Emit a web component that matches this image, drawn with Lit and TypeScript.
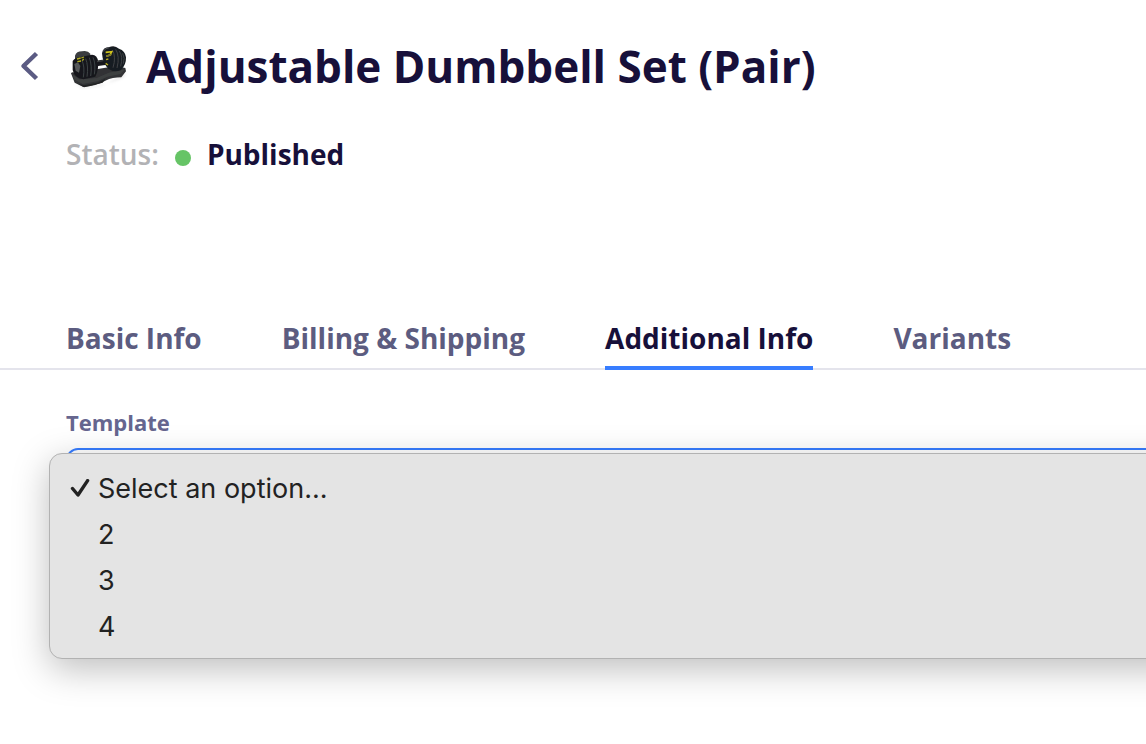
import { LitElement, html, css, svg } from "lit";
import { customElement, state } from "lit/decorators.js";
import { classMap } from "lit/directives/class-map.js";

const TABS = ["Basic Info", "Billing & Shipping", "Additional Info", "Variants"];
const OPTIONS = ["Select an option...", "2", "3", "4"];

const chevron = svg`<path d="M36.5 23.5 L23.5 36 L36.5 48.5" fill="none" stroke="#5b5b83" stroke-width="4.5" stroke-linejoin="round" />`;

@customElement("product-thumb")
export class ProductThumb extends LitElement {
  static styles = css`
    :host {
      display: block;
      flex: none;
      width: 64px;
      height: 50px;
    }
    .art {
      display: block;
      width: 100%;
      height: 100%;
    }
  `;

  render() {
    return html`
      <svg class="art" viewBox="0 -3 192 150" role="img" aria-label="Dumbbell set">
        <defs>
          <filter id="soft"><feGaussianBlur stdDeviation="1.5" /></filter>
          <filter id="shade"><feGaussianBlur stdDeviation="4" /></filter>
        </defs>
        <path d="M22 118 L52 136 L120 126 L180 94 L170 106 L110 130 L50 139 Z" fill="#999" opacity=".4" filter="url(#shade)" />
        <g filter="url(#soft)">
          <path d="M15 94 Q18 88 28 92 L150 72 L178 78 L180 88 L166 106 Q140 106 118 116 Q90 132 52 135 L26 122 Z" fill="#303234" />
          <path d="M17 95 L40 112 L92 108 L128 92 L176 82 L164 96 L124 104 L94 118 L50 126 L26 113 Z" fill="#3e3f41" />
          <path d="M36 125 L54 130 L96 122 L118 110 L110 122 L54 136 Z" fill="#202224" />
          <path d="M27 41 Q31 28 48 28 Q65 24 73 35 L73 52 L27 56 Z" fill="#3a3d3f" />
          <path d="M20 57 Q28 45 48 44 L78 38 Q94 38 96 58 Q99 82 88 104 L52 112 Q25 108 20 84 Z" fill="#16191c" />
          <path d="M87 57 L122 51 L123 68 L91 73 Z" fill="#17191b" />
          <path d="M93 59 L118 55" stroke="#414446" stroke-width="3" />
          <path d="M108 34 Q111 15 130 15 Q146 8 159 20 Q178 26 180 46 Q181 69 164 85 Q145 93 127 80 Q110 64 108 34 Z" fill="#191c20" />
          <path d="M111 28 Q119 18 130 17" stroke="#505457" stroke-width="3" fill="none" />
          <g fill="none" stroke="#45494d" stroke-width="2.5">
            <path d="M48 55 Q57 75 52 106" />
            <path d="M59 50 Q68 73 63 104" />
            <path d="M70 47 Q79 71 74 102" />
            <path d="M81 46 Q90 67 85 97" />
            <path d="M139 24 Q151 44 141 77" />
            <path d="M149 22 Q162 43 153 78" />
            <path d="M160 27 Q172 43 164 73" />
            <path d="M170 34 Q178 48 172 65" />
          </g>
          <path d="M25 66 L36 61 L43 72 L39 92 L29 86 Z" fill="#56595a" />
          <path d="M33 51 L44 48 M46 48 L54 45 M34 59 L45 57 M49 56 L53 51" stroke="#b5ae25" stroke-width="4" />
          <path d="M119 31 L137 29 L132 39 L121 43" fill="none" stroke="#d1c51d" stroke-width="5" />
          <path d="M121 43 L137 37" stroke="#77742a" stroke-width="5" />
          <path d="M120 53 L127 51 M119 64 L126 69" stroke="#b8ad21" stroke-width="4" />
        </g>
      </svg>
    `;
  }
}

@customElement("app-root")
export class AppRoot extends LitElement {
  static styles = css`
    :host {
      display: block;
      min-height: 100vh;
      overflow: hidden;
      background: #fff;
      color: #17103a;
      font-family: "Open Sans", "Noto Sans", sans-serif;
    }
    * {
      box-sizing: border-box;
    }
    button {
      margin: 0;
      padding: 0;
      border: 0;
      background: none;
      font: inherit;
      color: inherit;
      text-align: left;
    }
    .head {
      display: flex;
      align-items: center;
      padding-top: 30px;
    }
    .back {
      flex: none;
      width: 66px;
      height: 72px;
    }
    .chevron {
      display: block;
      width: 66px;
      height: 72px;
    }
    .title {
      margin: 0 0 0 16px;
      font-size: 44px;
      line-height: 72px;
      font-weight: 700;
      white-space: nowrap;
    }
    .status {
      display: flex;
      align-items: center;
      margin: 32px 0 0;
      padding-left: 66px;
      font-size: 28px;
      line-height: 40px;
    }
    .status-label {
      font-weight: 600;
      color: #b2b2b5;
    }
    .dot {
      width: 16px;
      height: 16px;
      margin: 8px 16px 0;
      border-radius: 50%;
      background: #66c466;
    }
    .status-value {
      font-weight: 700;
    }
    .tabs {
      display: flex;
      gap: 80px;
      margin-top: 144px;
      padding-left: 66px;
      border-bottom: 2px solid #e4e4ec;
    }
    .tab {
      height: 52px;
      margin-bottom: -2px;
      padding-bottom: 8px;
      border-bottom: 4px solid transparent;
      font-size: 28px;
      line-height: 40px;
      font-weight: 700;
      color: #5c5c80;
      white-space: nowrap;
    }
    .tab.active {
      border-bottom-color: #377dff;
      color: #17103a;
    }
    .panel {
      padding: 38px 0 0 66px;
    }
    .label {
      display: block;
      font-size: 22px;
      line-height: 28px;
      font-weight: 700;
      color: #66668f;
    }
    .field {
      position: relative;
      margin-top: 12px;
      margin-right: -40px;
    }
    .select {
      display: block;
      width: 100%;
      height: 80px;
      padding: 0 24px;
      appearance: none;
      border: 2px solid #377dff;
      border-radius: 12px;
      outline: none;
      background: #fff;
      font: 28px "Open Sans", sans-serif;
      color: #17103a;
    }
    .menu {
      position: absolute;
      top: 5px;
      left: -17px;
      right: -17px;
      padding: 12px 0 8px;
      border: 1px solid #b2b2b2;
      border-radius: 13px;
      background: #e4e4e4;
      box-shadow: 0 10px 36px rgba(0, 0, 0, 0.26);
      font-family: Inter, "Liberation Sans", sans-serif;
      font-size: 27px;
      font-weight: 400;
      line-height: 46px;
      color: #222;
    }
    .option {
      display: grid;
      grid-template-columns: 20px 1fr;
      gap: 8px;
      align-items: center;
      width: 100%;
      padding-left: 20px;
    }
    .check {
      width: 20px;
      height: 20px;
    }
  `;

  @state() private tab = "Additional Info";
  @state() private selected = OPTIONS[0];

  render() {
    return html`
      <header class="head">
        <button class="back" type="button" aria-label="Back">
          <svg class="chevron" viewBox="0 0 66 72" aria-hidden="true">${chevron}</svg>
        </button>
        <product-thumb></product-thumb>
        <h1 class="title">Adjustable Dumbbell Set (Pair)</h1>
      </header>
      <p class="status">
        <span class="status-label">Status:</span>
        <span class="dot"></span>
        <span class="status-value">Published</span>
      </p>
      <nav class="tabs" role="tablist">
        ${TABS.map(
          (name) => html`<button
            type="button"
            role="tab"
            aria-selected=${name === this.tab}
            class=${classMap({ tab: true, active: name === this.tab })}
            @click=${() => (this.tab = name)}
          >${name}</button>`,
        )}
      </nav>
      <main class="panel">
        <label class="label" for="template">Template</label>
        <div class="field">
          <select class="select" id="template">
            ${OPTIONS.map((o) => html`<option ?selected=${o === this.selected}>${o}</option>`)}
          </select>
          <div class="menu" role="listbox" aria-label="Template">
            ${OPTIONS.map(
              (o) => html`<button
                type="button"
                role="option"
                class="option"
                aria-selected=${o === this.selected}
                @click=${() => (this.selected = o)}
              >
                <svg class="check" viewBox="0 0 20 20" aria-hidden="true">
                  ${o === this.selected
                    ? svg`<path d="M2.5 9.5 L8 16 L17.6 1.6" fill="none" stroke="#222" stroke-width="3.4" stroke-linecap="round" stroke-linejoin="round" />`
                    : null}
                </svg>
                <span>${o}</span>
              </button>`,
            )}
          </div>
        </div>
      </main>
    `;
  }
}
